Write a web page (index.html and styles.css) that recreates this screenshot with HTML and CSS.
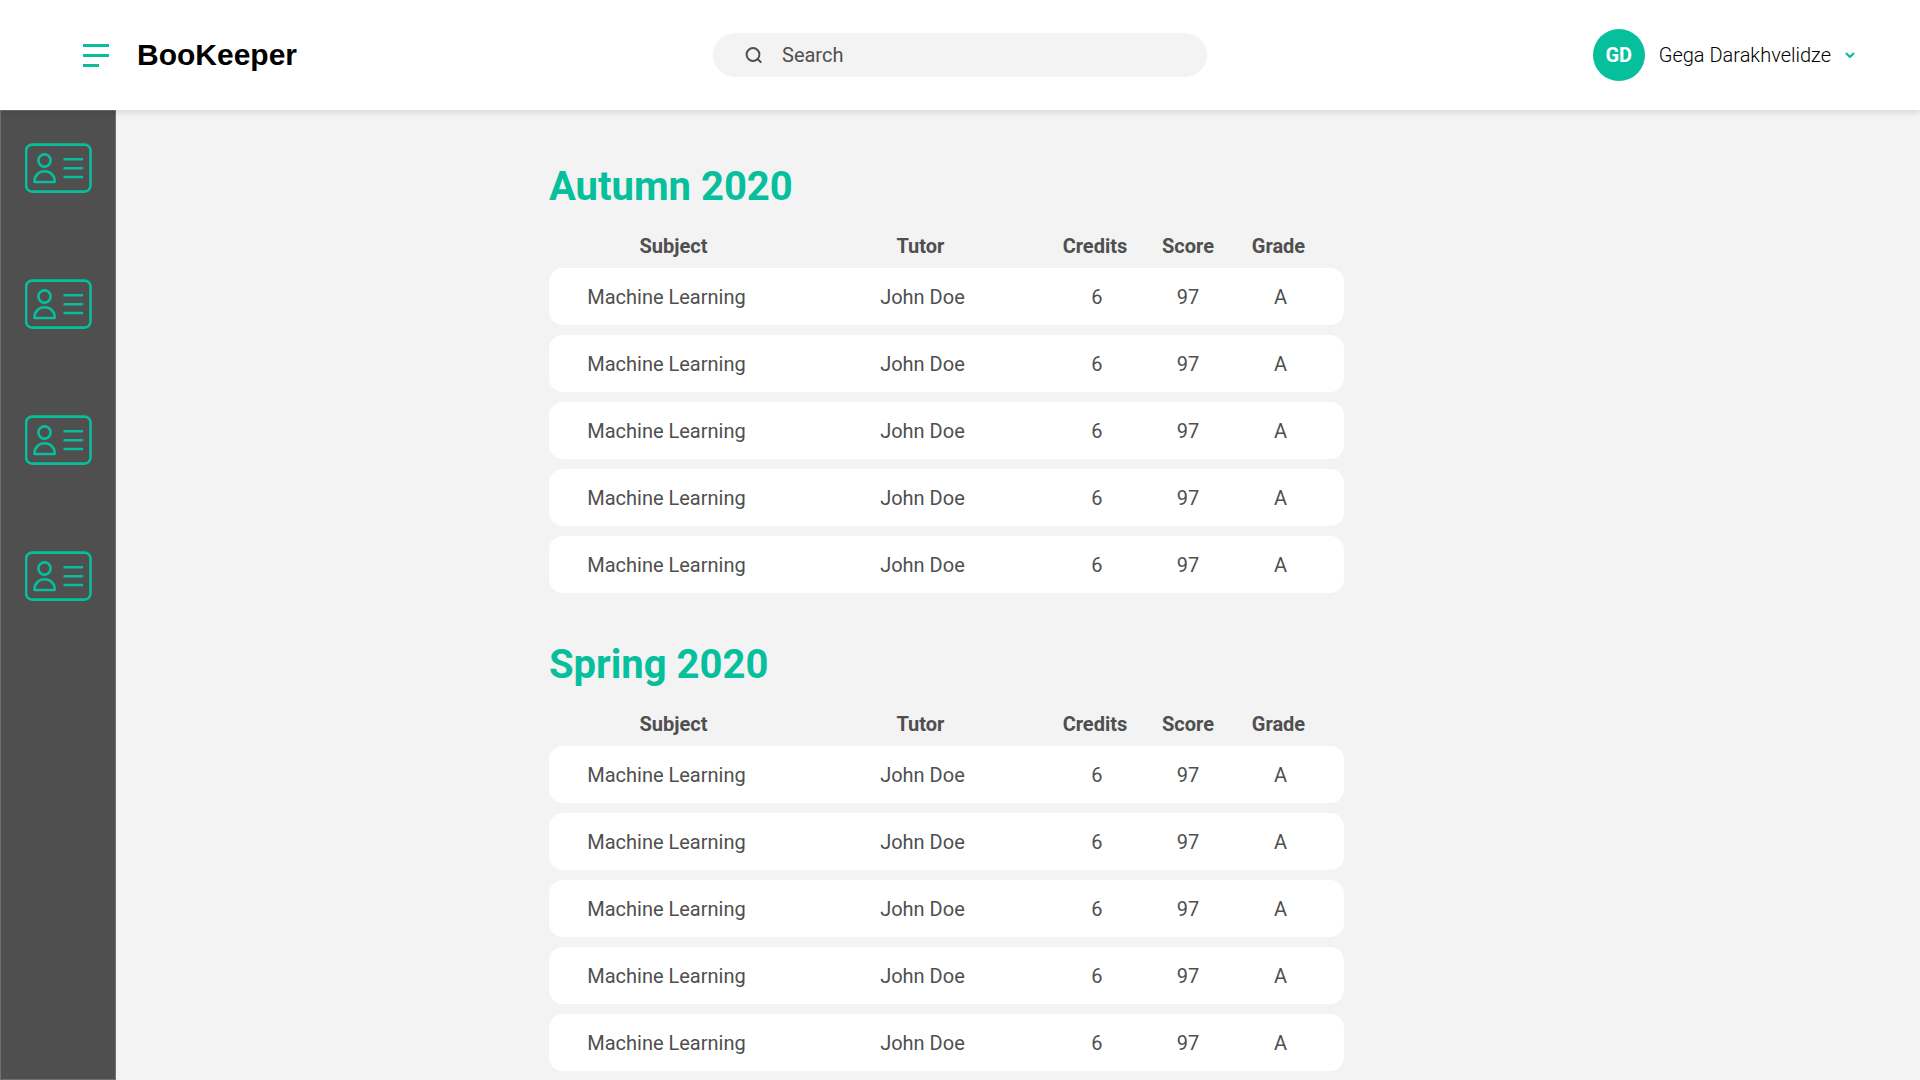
FILE: index.html
```html
<!DOCTYPE html>
<html lang="en">
<head>
<meta charset="utf-8">
<meta name="viewport" content="width=device-width, initial-scale=1">
<title>BooKeeper</title>
<link rel="stylesheet" href="styles.css">
</head>
<body>
<svg class="sprite" aria-hidden="true">
  <symbol id="id-card" viewBox="0 0 67 50">
    <rect x="1.1" y="1.6" width="64.4" height="47" rx="6"/>
    <circle cx="19.5" cy="17.5" r="6.1"/>
    <path d="M9.6 39v-1.2a10 9.6 0 0 1 20 0v1.2z"/>
    <path d="M39.6 16.3h17.4M39.6 25.2h17.4M39.6 34h17.4"/>
  </symbol>
</svg>
<header class="topbar">
  <div class="brand">
    <button class="menu" type="button" aria-label="Menu">
      <svg width="26" height="24" viewBox="0 0 26 24"><path d="M0 2.5h26M0 12.6h26M0 22.5h16" stroke="currentColor" stroke-width="3"/></svg>
    </button>
    <a class="logo" href="#">BooKeeper</a>
  </div>
  <label class="search">
    <svg width="17" height="17" viewBox="0 0 17 17" fill="none" stroke="currentColor" stroke-width="2"><circle cx="8" cy="7.5" r="6.4"/><path d="M12.3 11.8l4 3.8"/></svg>
    <input type="search" placeholder="Search" aria-label="Search">
  </label>
  <button class="account" type="button">
    <span class="avatar">GD</span>
    <span>Gega Darakhvelidze</span>
    <svg class="chevron" width="10" height="6" viewBox="0 0 10 6" fill="none" stroke="currentColor" stroke-width="2.2"><path d="M1 1l4 4 4-4"/></svg>
  </button>
</header>
<div class="layout">
  <nav class="sidebar" aria-label="Sections">
    <a href="#" aria-label="Profile"><svg class="card-icon"><use href="#id-card"/></svg></a>
    <a href="#" aria-label="Subjects"><svg class="card-icon"><use href="#id-card"/></svg></a>
    <a href="#" aria-label="Tutors"><svg class="card-icon"><use href="#id-card"/></svg></a>
    <a href="#" aria-label="Grades"><svg class="card-icon"><use href="#id-card"/></svg></a>
  </nav>
  <main class="content">
    <section class="term">
      <h2 id="autumn">Autumn 2020</h2>
      <table aria-labelledby="autumn">
        <colgroup><col class="subject"><col class="tutor"><col class="credits"><col class="score"><col class="grade"></colgroup>
        <thead><tr><th>Subject</th><th>Tutor</th><th>Credits</th><th>Score</th><th>Grade</th></tr></thead>
        <tbody>
          <tr><td>Machine Learning</td><td>John Doe</td><td>6</td><td>97</td><td>A</td></tr>
          <tr><td>Machine Learning</td><td>John Doe</td><td>6</td><td>97</td><td>A</td></tr>
          <tr><td>Machine Learning</td><td>John Doe</td><td>6</td><td>97</td><td>A</td></tr>
          <tr><td>Machine Learning</td><td>John Doe</td><td>6</td><td>97</td><td>A</td></tr>
          <tr><td>Machine Learning</td><td>John Doe</td><td>6</td><td>97</td><td>A</td></tr>
        </tbody>
      </table>
    </section>
    <section class="term">
      <h2 id="spring">Spring 2020</h2>
      <table aria-labelledby="spring">
        <colgroup><col class="subject"><col class="tutor"><col class="credits"><col class="score"><col class="grade"></colgroup>
        <thead><tr><th>Subject</th><th>Tutor</th><th>Credits</th><th>Score</th><th>Grade</th></tr></thead>
        <tbody>
          <tr><td>Machine Learning</td><td>John Doe</td><td>6</td><td>97</td><td>A</td></tr>
          <tr><td>Machine Learning</td><td>John Doe</td><td>6</td><td>97</td><td>A</td></tr>
          <tr><td>Machine Learning</td><td>John Doe</td><td>6</td><td>97</td><td>A</td></tr>
          <tr><td>Machine Learning</td><td>John Doe</td><td>6</td><td>97</td><td>A</td></tr>
          <tr><td>Machine Learning</td><td>John Doe</td><td>6</td><td>97</td><td>A</td></tr>
        </tbody>
      </table>
    </section>
  </main>
</div>
</body>
</html>
```
FILE: styles.css
```css
:root {
  --green: #06bf9c;
  --ink: #4f4f4f;
  --page: #f3f3f3;
}

* {
  box-sizing: border-box;
}

body {
  margin: 0;
  min-height: 100vh;
  display: flex;
  flex-direction: column;
  background: var(--page);
  color: var(--ink);
  font: 20px/24px Roboto, sans-serif;
}

button {
  padding: 0;
  border: 0;
  background: none;
  font: inherit;
  cursor: pointer;
}

svg {
  display: block;
}

.sprite {
  display: none;
}

.topbar {
  position: relative;
  z-index: 1;
  display: grid;
  grid-template-columns: 1fr minmax(200px, 494px) 1fr;
  align-items: center;
  height: 110px;
  background: #fff;
  box-shadow: 0 3px 6px rgba(0, 0, 0, 0.1);
}

.brand {
  display: flex;
  align-items: center;
  gap: 28px;
  padding-left: 83px;
}

.menu {
  color: var(--green);
}

.logo {
  color: #000;
  font: bold 30px/36px "Liberation Sans", sans-serif;
  text-decoration: none;
}

.search {
  display: flex;
  align-items: center;
  gap: 20px;
  height: 44px;
  padding: 0 32px;
  border-radius: 22px;
  background: var(--page);
}

.search input {
  flex: 1;
  min-width: 0;
  padding: 0;
  border: 0;
  outline: 0;
  background: none;
  color: inherit;
  font: inherit;
}

.search input::placeholder {
  color: inherit;
}

.account {
  display: flex;
  align-items: center;
  justify-self: end;
  gap: 14px;
  padding-right: 65px;
  color: #000;
  font-weight: 300;
}

.avatar {
  width: 52px;
  border-radius: 50%;
  background: var(--green);
  color: #fff;
  font-weight: 700;
  line-height: 52px;
}

.chevron {
  color: var(--green);
}

.layout {
  flex: 1;
  display: flex;
}

.sidebar {
  flex: none;
  display: flex;
  flex-direction: column;
  gap: 86px;
  width: 116px;
  padding: 32px 24px;
  border: 1px solid #707070;
  background: var(--ink);
}

.card-icon {
  width: 67px;
  height: 50px;
  fill: none;
  stroke: var(--green);
  stroke-width: 2.6;
  stroke-linecap: round;
  stroke-linejoin: round;
}

.content {
  flex: 1;
  display: flex;
  flex-direction: column;
  gap: 48px;
  padding-top: 53px;
}

.term {
  max-width: 795px;
  margin-left: 24%;
}

.term h2 {
  margin: 0 0 23px;
  color: var(--green);
  font-size: 40px;
  line-height: 48px;
}

table {
  width: 100%;
  margin: -10px 0;
  border-spacing: 0 10px;
  table-layout: fixed;
  text-align: center;
}

.subject {
  width: 235px;
}

.tutor {
  width: 277px;
}

.credits {
  width: 72px;
}

.score {
  width: 110px;
}

.grade {
  width: 101px;
}

th,
td {
  padding: 0;
}

th {
  font-weight: 700;
}

th:first-child {
  padding-left: 14px;
}

th:nth-child(2),
th:nth-child(3) {
  padding-right: 4px;
}

th:last-child {
  padding-right: 30px;
}

td {
  height: 57px;
  background: #fff;
}

td:first-child {
  border-radius: 14px 0 0 14px;
}

td:last-child {
  padding-right: 26px;
  border-radius: 0 14px 14px 0;
}
```
